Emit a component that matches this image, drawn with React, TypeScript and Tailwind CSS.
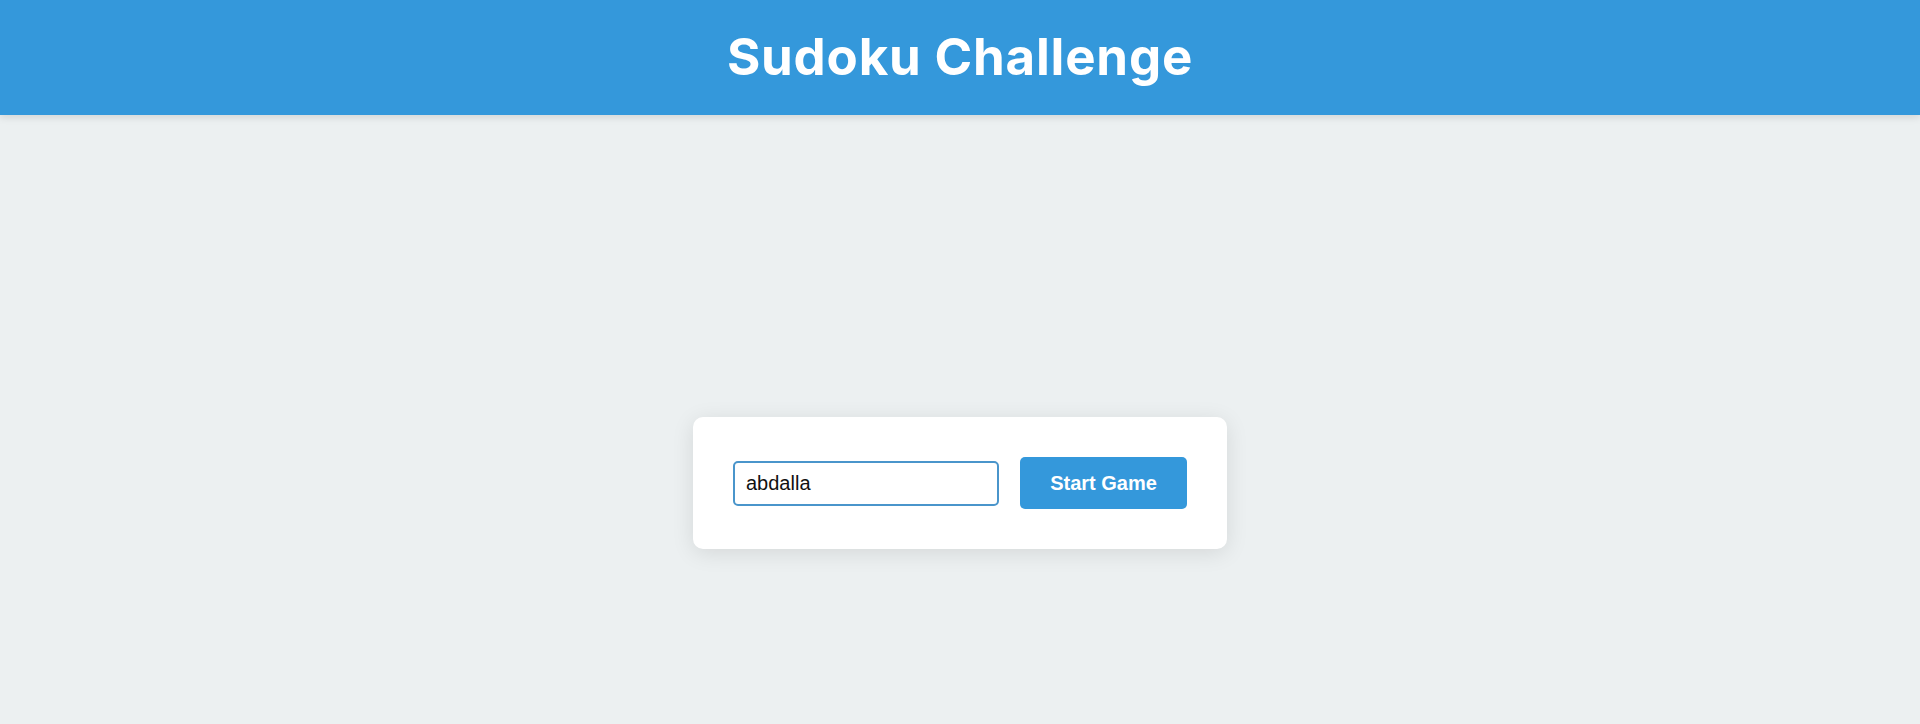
import React from "react";

export default function App() {
  return (
    <div className="min-h-[724px] bg-[#ecf0f1] font-['Liberation_Sans',Arial,sans-serif]">
      <header className="relative z-10 flex h-[115px] items-center justify-center bg-[#3498db] pb-[2px] shadow-[0_2px_8px_rgba(0,0,0,0.12)]">
        <h1 className="font-['Inter',sans-serif] text-[51px] font-bold leading-none tracking-[0.8px] text-white">
          Sudoku Challenge
        </h1>
      </header>
      <main className="flex justify-center pt-[302px]">
        <div className="flex items-center gap-[21px] rounded-[10px] bg-white p-[40px] shadow-[0_4px_22px_rgba(0,0,0,0.1)]">
          <input
            defaultValue="abdalla"
            className="h-[45px] w-[266px] rounded-[5px] border-2 border-[#4a95cb] px-[11px] text-[20px] text-[#111] outline-none font-['Liberation_Sans',Arial,sans-serif]"
          />
          <button className="h-[52px] w-[167px] rounded-[5px] bg-[#3498db] text-[20px] font-bold text-white font-['Liberation_Sans',Arial,sans-serif]">
            Start Game
          </button>
        </div>
      </main>
    </div>
  );
}
